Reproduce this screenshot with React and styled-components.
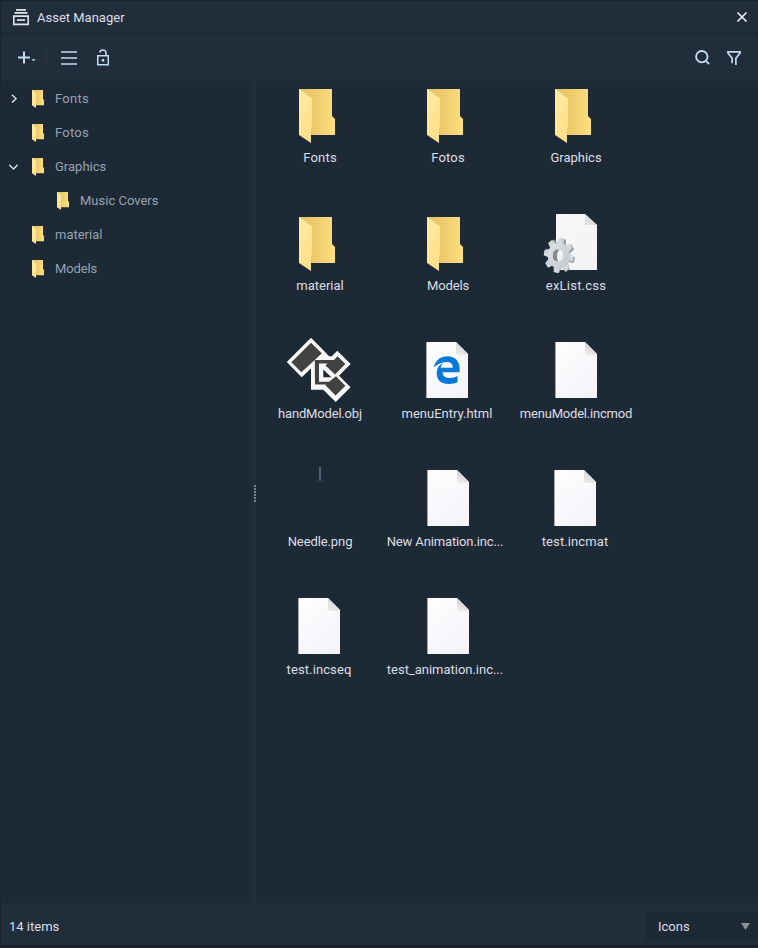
import React from "react";
import styled, { createGlobalStyle } from "styled-components";

const GlobalStyle = createGlobalStyle`
  * { box-sizing: border-box; }
  body { margin: 0; background: #1d232f; }
`;

const Window = styled.main`
  width: 758px;
  height: 948px;
  padding: 1px 0 3px 1px;
  display: flex;
  flex-direction: column;
  overflow: hidden;
  background: #1c2430;
  color: #dcdfe4;
  font: 13px/18px Roboto, sans-serif;
`;

const TitleBar = styled.header`
  height: 32px;
  flex: none;
  margin-bottom: 1px;
  padding: 0 10px 0 12px;
  display: flex;
  align-items: center;
  border-radius: 2px;
  background: #222d3c;
`;

const Title = styled.h1`
  flex: 1;
  margin: 0 0 0 8px;
  padding-top: 2px;
  font: inherit;
`;

const Toolbar = styled.div`
  height: 47px;
  flex: none;
  padding: 0 17px 0 15px;
  display: flex;
  align-items: center;
  border-radius: 2px 2px 0 0;
  background: #222d3c;
  color: #c3dcf5;
`;

const ToolButton = styled.button`
  width: ${(p) => p.$width}px;
  height: 20px;
  margin: 0 0 0 ${(p) => p.$gap || 0}px;
  padding: 0;
  border: 0;
  background: none;
  color: inherit;
  svg { display: block; }
`;

const Divider = styled.span`
  width: 2px;
  height: 17px;
  margin-left: 10px;
  background: #273140;
`;

const Spacer = styled.span`
  flex: 1;
`;

const Body = styled.div`
  flex: 1;
  min-height: 0;
  display: flex;
  background: #222d3c;
`;

const Tree = styled.nav`
  width: 250px;
  padding-top: 1px;
  border-radius: 2px;
  background: #1e2936;
  color: #97a3b2;
`;

const TreeRow = styled.div`
  height: 34px;
  padding-left: ${(p) => 7 + p.$depth * 25}px;
  display: flex;
  align-items: center;
  svg { flex: none; }
`;

const Chevron = styled.span`
  width: 12px;
  height: 12px;
  margin-right: 12px;
  color: #e3e6ea;
  svg { display: block; }
`;

const TreeLabel = styled.span`
  margin-left: 11px;
  letter-spacing: ${(p) => p.$tracking || 0}px;
`;

const Splitter = styled.div`
  width: 5px;
  padding: 2px 0 0 3px;
  display: flex;
  flex-direction: column;
  justify-content: center;
  gap: 1px;
`;

const Grip = styled.i`
  width: 2px;
  height: 2px;
  background: #7d848f;
`;

const Content = styled.section`
  flex: 1;
  border-radius: 2px 0 0 2px;
  background: #1e2936;
  display: grid;
  grid-template-columns: repeat(3, 128px);
  grid-auto-rows: 128px;
  align-content: start;
  padding-top: 1px;
`;

const Item = styled.figure`
  margin: 0;
  padding-right: ${(p) => p.$nudge || 0}px;
  display: flex;
  flex-direction: column;
  align-items: center;
  svg { display: block; overflow: visible; }
`;

const ItemLabel = styled.figcaption`
  margin-top: 3px;
  padding-right: ${(p) => (p.$clipped ? 6 : 0)}px;
  white-space: nowrap;
  letter-spacing: ${(p) => p.$tracking || 0}px;
`;

const Footer = styled.footer`
  height: 42px;
  flex: none;
  padding: 0 0 0 8px;
  display: flex;
  align-items: center;
  justify-content: space-between;
  background: #222d3c;
`;

const Count = styled.span`
  padding-top: 6px;
`;

const ViewSelect = styled.button`
  width: 112px;
  height: 30px;
  margin-top: 4px;
  padding: 1px 8px 0 12px;
  display: flex;
  align-items: center;
  justify-content: space-between;
  border: 0;
  border-radius: 3px;
  background: #1e2936;
  color: inherit;
  font: inherit;
`;

const ArchiveIcon = () => (
  <svg width="16" height="17" viewBox="0 0 16 17" fill="#dfe2e7">
    <path d="M3 0h10v1.700H3zM1.500 3h13v1.700h-13z" />
    <path fillRule="evenodd" d="M0 6.300h16V16.300H0zM1.600 8v6.600h12.800V8z" />
    <path d="M4 10.200h8v1.700H4z" />
  </svg>
);

const CloseIcon = () => (
  <svg width="12" height="12" viewBox="0 0 12 12" fill="none" stroke="#f0f1f3" strokeWidth="1.6">
    <path d="M1.500 1.500 10.500 10.500M10.500 1.500 1.500 10.500" />
  </svg>
);

const AddIcon = () => (
  <svg width="20" height="20" viewBox="0 0 20 20" fill="currentColor">
    <path d="M2 8.500h5v-5h2v5h5v2H9v5H7v-5H2zM15.500 11.300h4l-2 2z" />
  </svg>
);

const MenuIcon = () => (
  <svg width="16" height="20" viewBox="0 0 16 20" stroke="currentColor" strokeWidth="1.6">
    <path d="M0 4h16M0 10h16M0 16h16" />
  </svg>
);

const LockIcon = () => (
  <svg width="12" height="20" viewBox="0 0 12 20" fill="none" stroke="currentColor" strokeWidth="1.5">
    <path d="M.75 7.750h10.500v9H.750zM2.800 4.500C3 1.200 9 .900 9 4.700v3" />
    <path d="M4.800 11h2.400v2.600H4.800z" fill="currentColor" stroke="none" />
  </svg>
);

const SearchIcon = () => (
  <svg width="16" height="20" viewBox="0 0 16 20" fill="none" stroke="currentColor" strokeWidth="1.8">
    <circle cx="6.800" cy="8.700" r="5.700" />
    <path d="m10.600 12.700 3.500 3.300" />
  </svg>
);

const FilterIcon = () => (
  <svg width="14" height="20" viewBox="0 0 14 20" fill="none" stroke="currentColor" strokeWidth="1.7">
    <path d="M5.100 15.200v-5L.900 5V3.800h12.200V5L8.900 10.200v6.800" />
  </svg>
);

const ChevronIcon = ({ open }) => (
  <svg width="12" height="12" viewBox="0 0 12 12" fill="none" stroke="currentColor" strokeWidth="1.3">
    <path d={open ? "M1.300 3.800 5.500 8 9.700 3.800" : "M3.900 1.800 8.100 5.700 3.900 9.600"} />
  </svg>
);

const FolderShape = () => (
  <>
    <path d="M11 7h33v27l3 3v16H11z" fill="url(#folderBack)" />
    <path d="m11 7 13 9.500V44l-1 2v15L11 53z" fill="url(#folderFront)" />
  </>
);

const SmallFolder = () => (
  <svg width="12" height="18" viewBox="11 7 36 54">
    <FolderShape />
  </svg>
);

const Page = ({ flat }) =>
  flat ? (
    <>
      <path d="M12 4h29l12 11v45H12z" fill="url(#plainPaper)" />
      <path d="M41 4v11h12z" fill="#dedede" />
    </>
  ) : (
    <>
      <path d="M11 4h30l12 12v44H11z" fill="url(#paper)" />
      <path d="M11 4h1v56h-1z" fill="#a6a8ab" />
      <path d="M41 4v12.700h12V16z" fill="url(#paperFold)" />
    </>
  );

const teeth = [0, 45, 90, 135, 180, 225, 270, 315];

const Gear = () => (
  <g transform="translate(14.700 45.500) scale(.88 1.030)">
    <g fill="#939a9f" transform="translate(1.600 .300)">
      {teeth.map((a) => (
        <path key={a} d="m-4-10 1.200-6.800h5.600L4-10z" transform={`rotate(${a + 14})`} />
      ))}
    </g>
    <g fill="url(#metal)">
      {teeth.map((a) => (
        <path key={a} d="m-4-10 1.200-6.800h5.600L4-10z" transform={`rotate(${a + 10})`} />
      ))}
      <path fillRule="evenodd" d="M-12.500 0a12.500 12.500 0 1 1 25 0 12.500 12.500 0 1 1-25 0m6 0a5.700 5.800 0 1 0 11.400 0 5.700 5.800 0 1 0-11.400 0" />
    </g>
    <path d="M1-5.600C-4-7-7.200-3.400-6.500 0-6 4-3 6.300 0 5.700-2.500 3-2.500-2.500 1-5.600" fill="#858b91" />
    <path d="M1-5.600C-2.500-2.500-2.500 3 0 5.700 3 5.400 4.900 3 4.900 0 4.900-3 3.500-5 1-5.600" fill="#f0f1f2" />
  </g>
);

const ModelShape = () => (
  <>
    <path d="M23-.200 38.300 15.200 41 18.300h2.800L49.300 12.800 62.600 26 51 37.800 62.600 49.200 47.700 64 35.300 51.800H23V30.500L13.700 39.200-1.200 24z" fill="#f8f8f8" />
    <path d="M23 4.700 33.800 15.300 26.800 22 13.300 34.200 3.400 24.200z" fill="#424242" />
    <path d="M26.800 22H46l3.500-3.700 7.800 7.700-10.300 10.600-9.500-9.100 2-2H31v18.200h10l7-5.500 9.400 9.500-9.800 9.800-10.400-10.400 1-.600H27z" fill="#424242" />
    <path d="M35.300 31.500 43.300 39.200h-8z" fill="#1e2936" />
  </>
);

const EdgeMark = () => (
  <path
    d="M8 29.800C10 22 15.200 18.500 21.500 18.500c8 0 12.400 5.500 12.400 12.400v4H16.700c.4 4.300 3.600 6 7.800 6 2.800 0 5.200-.8 7.300-2v6c-2.400 1.400-5.300 2-8.600 2C15.600 46.900 11 42.800 11 35.900c0-4.700 2.400-8.500 6.400-10.400-1.400 1.300-2.100 3-2.400 4.900h12.100c0-3.800-1.900-6-5.700-6-5.300 0-9.900 2.200-13.400 5.400Z"
    fill="#0879d9"
    transform="translate(10.700 0) scale(1 .98)"
  />
);

const NeedleShape = () => (
  <>
    <path d="M31 1h2v13h-2z" fill="#536079" />
    <path d="M25 15.800c4-.5 5-1.600 6-2.600h2c1 1 2 2.100 6 2.600z" fill="#303c50" />
  </>
);

const shapes = {
  folder: <FolderShape />,
  css: <><Page flat /><Gear /></>,
  model: <ModelShape />,
  html: <><Page /><EdgeMark /></>,
  file: <Page />,
  image: <NeedleShape />,
};

const tree = [
  { name: "Fonts", depth: 0, open: false, tracking: 0.25 },
  { name: "Fotos", depth: 0, tracking: 0.25 },
  { name: "Graphics", depth: 0, open: true },
  { name: "Music Covers", depth: 1 },
  { name: "material", depth: 0 },
  { name: "Models", depth: 0, tracking: -0.15 },
];

const items = [
  { name: "Fonts", kind: "folder", tracking: 0.2 },
  { name: "Fotos", kind: "folder", tracking: 0.2 },
  { name: "Graphics", kind: "folder" },
  { name: "material", kind: "folder" },
  { name: "Models", kind: "folder", tracking: -0.15 },
  { name: "exList.css", kind: "css", tracking: 0.22 },
  { name: "handModel.obj", kind: "model", tracking: -0.18 },
  { name: "menuEntry.html", kind: "html", nudge: 2 },
  { name: "menuModel.incmod", kind: "file", tracking: -0.2 },
  { name: "Needle.png", kind: "image", tracking: -0.1 },
  { name: "New Animation.inc...", kind: "file", tracking: -0.14, clipped: true },
  { name: "test.incmat", kind: "file", nudge: 2, tracking: 0.1 },
  { name: "test.incseq", kind: "file", nudge: 2, tracking: 0.1 },
  { name: "test_animation.inc...", kind: "file", tracking: -0.02, clipped: true },
];

const Gradients = () => (
  <defs>
    <linearGradient id="folderBack" x1="0.3" x2="1" y1="0" y2="0">
      <stop stopColor="#e9c767" />
      <stop offset="1" stopColor="#ffdf80" />
    </linearGradient>
    <linearGradient id="folderFront" x1="0" x2="0.5" y1="0" y2="1">
      <stop stopColor="#ffeaa6" />
      <stop offset="1" stopColor="#ffe08a" />
    </linearGradient>
    <linearGradient id="paper" x1="0" x2="0.6" y1="0" y2="1">
      <stop stopColor="#fefefe" />
      <stop offset="1" stopColor="#f3f5f9" />
    </linearGradient>
    <linearGradient id="plainPaper" x1="0" x2="1" y1="0" y2="1">
      <stop stopColor="#f8f8f8" />
      <stop offset="1" stopColor="#f2f2f2" />
    </linearGradient>
    <linearGradient id="paperFold" x1="0.5" x2="0" y1="0" y2="1">
      <stop stopColor="#d2d2d2" />
      <stop offset="1" stopColor="#ececec" />
    </linearGradient>
    <linearGradient id="metal" x1="0" x2="1" y1="0" y2="1">
      <stop stopColor="#dce1e5" />
      <stop offset="1" stopColor="#c3c9ce" />
    </linearGradient>
  </defs>
);

const DefsSvg = styled.svg`
  position: absolute;
  width: 0;
  height: 0;
`;

export default function App() {
  return (
    <>
      <GlobalStyle />
      <DefsSvg aria-hidden="true"><Gradients /></DefsSvg>
      <Window>
        <TitleBar>
          <ArchiveIcon />
          <Title>Asset Manager</Title>
          <CloseIcon />
        </TitleBar>
        <Toolbar>
          <ToolButton $width={20} aria-label="Add"><AddIcon /></ToolButton>
          <Divider />
          <ToolButton $width={16} $gap={13} aria-label="List"><MenuIcon /></ToolButton>
          <ToolButton $width={12} $gap={20} aria-label="Lock"><LockIcon /></ToolButton>
          <Spacer />
          <ToolButton $width={16} aria-label="Search"><SearchIcon /></ToolButton>
          <ToolButton $width={14} $gap={16} aria-label="Filter"><FilterIcon /></ToolButton>
        </Toolbar>
        <Body>
          <Tree>
            {tree.map((n) => (
              <TreeRow key={n.name} $depth={n.depth}>
                <Chevron>{n.open !== undefined && <ChevronIcon open={n.open} />}</Chevron>
                <SmallFolder />
                <TreeLabel $tracking={n.tracking}>{n.name}</TreeLabel>
              </TreeRow>
            ))}
          </Tree>
          <Splitter>
            {[0, 1, 2, 3, 4, 5].map((i) => <Grip key={i} />)}
          </Splitter>
          <Content>
            {items.map((it) => (
              <Item key={it.name} $nudge={it.nudge}>
                <svg width="64" height="64" viewBox="0 0 64 64">{shapes[it.kind]}</svg>
                <ItemLabel $tracking={it.tracking} $clipped={it.clipped}>{it.name}</ItemLabel>
              </Item>
            ))}
          </Content>
        </Body>
        <Footer>
          <Count>14 items</Count>
          <ViewSelect>
            Icons
            <svg width="9" height="7" viewBox="0 0 9 7"><path d="M0 0h9L4.500 7z" fill="#8f9298" /></svg>
          </ViewSelect>
        </Footer>
      </Window>
    </>
  );
}
